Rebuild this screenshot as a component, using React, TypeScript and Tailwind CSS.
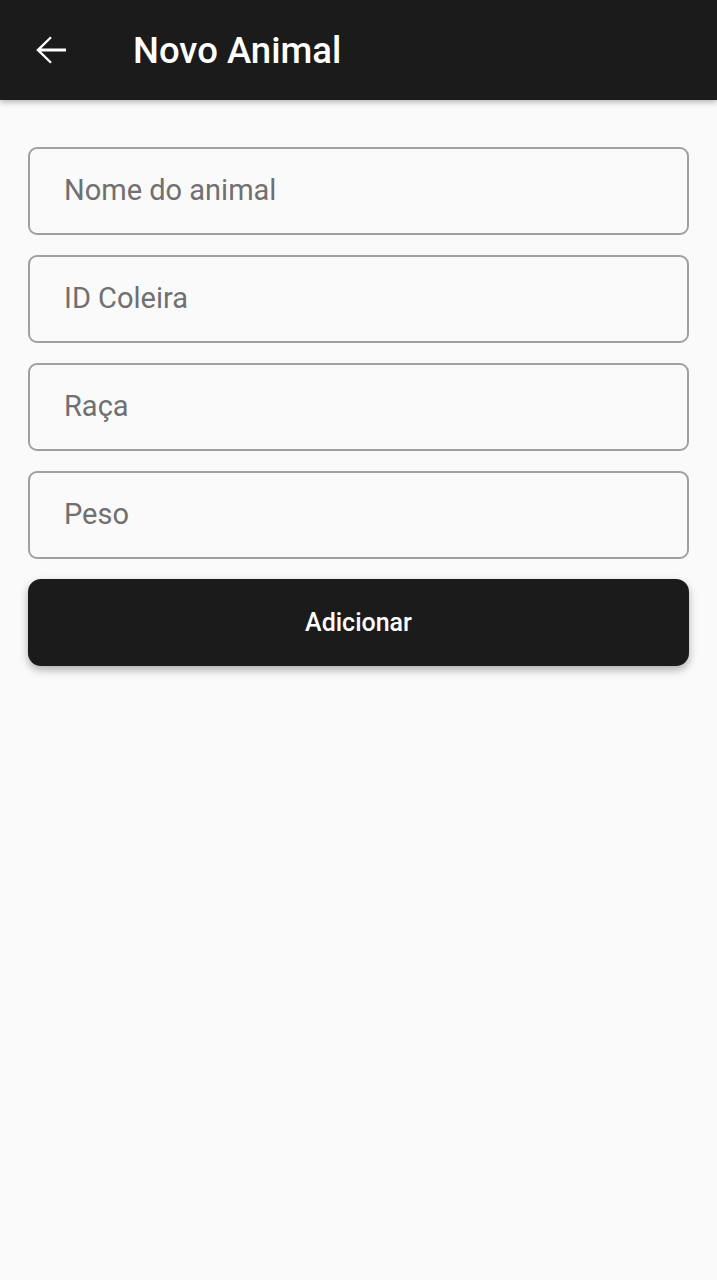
import { useState } from "react";

const fields = ["Nome do animal", "ID Coleira", "Raça", "Peso"];

const NovoAnimal = () => {
  const [values, setValues] = useState<string[]>(fields.map(() => ""));

  return (
    <div className="flex min-h-[1280px] flex-col bg-[#fafafa] font-['Roboto',sans-serif]">
      <header className="flex h-[100px] items-center bg-[#1b1b1b] shadow-[0_2px_6px_rgba(0,0,0,0.3)]">
        <button className="ml-[26px] flex h-12 w-12 items-center justify-center text-white">
          <svg width="48" height="48" viewBox="0 0 24 24" fill="currentColor">
            <path d="M20 11.3H7.6l5.3-5.3-.8-.8L5.1 12l7 6.8.8-.8-5.3-5.3H20v-1.4z" />
          </svg>
        </button>
        <h1 className="ml-[59px] pt-[3px] text-[36.5px] font-medium text-white">Novo Animal</h1>
      </header>
      <div className="flex flex-col gap-5 px-7 pt-[47px]">
        {fields.map((label, i) => (
          <input
            key={label}
            placeholder={label}
            value={values[i]}
            onChange={(e) => {
              const next = [...values];
              next[i] = e.target.value;
              setValues(next);
            }}
            className="h-[88px] w-full rounded-[9px] border-2 border-[#a0a0a0] bg-transparent px-[34px] pb-[3px] text-[29px] text-[#222] outline-none placeholder:text-[#707070]"
          />
        ))}
        <button className="h-[87px] w-full rounded-[13px] bg-[#1b1b1b] text-[25px] font-medium text-white shadow-[0_4px_8px_rgba(0,0,0,0.3)]">
          Adicionar
        </button>
      </div>
    </div>
  );
};

export default function App() {
  return <NovoAnimal />;
}
